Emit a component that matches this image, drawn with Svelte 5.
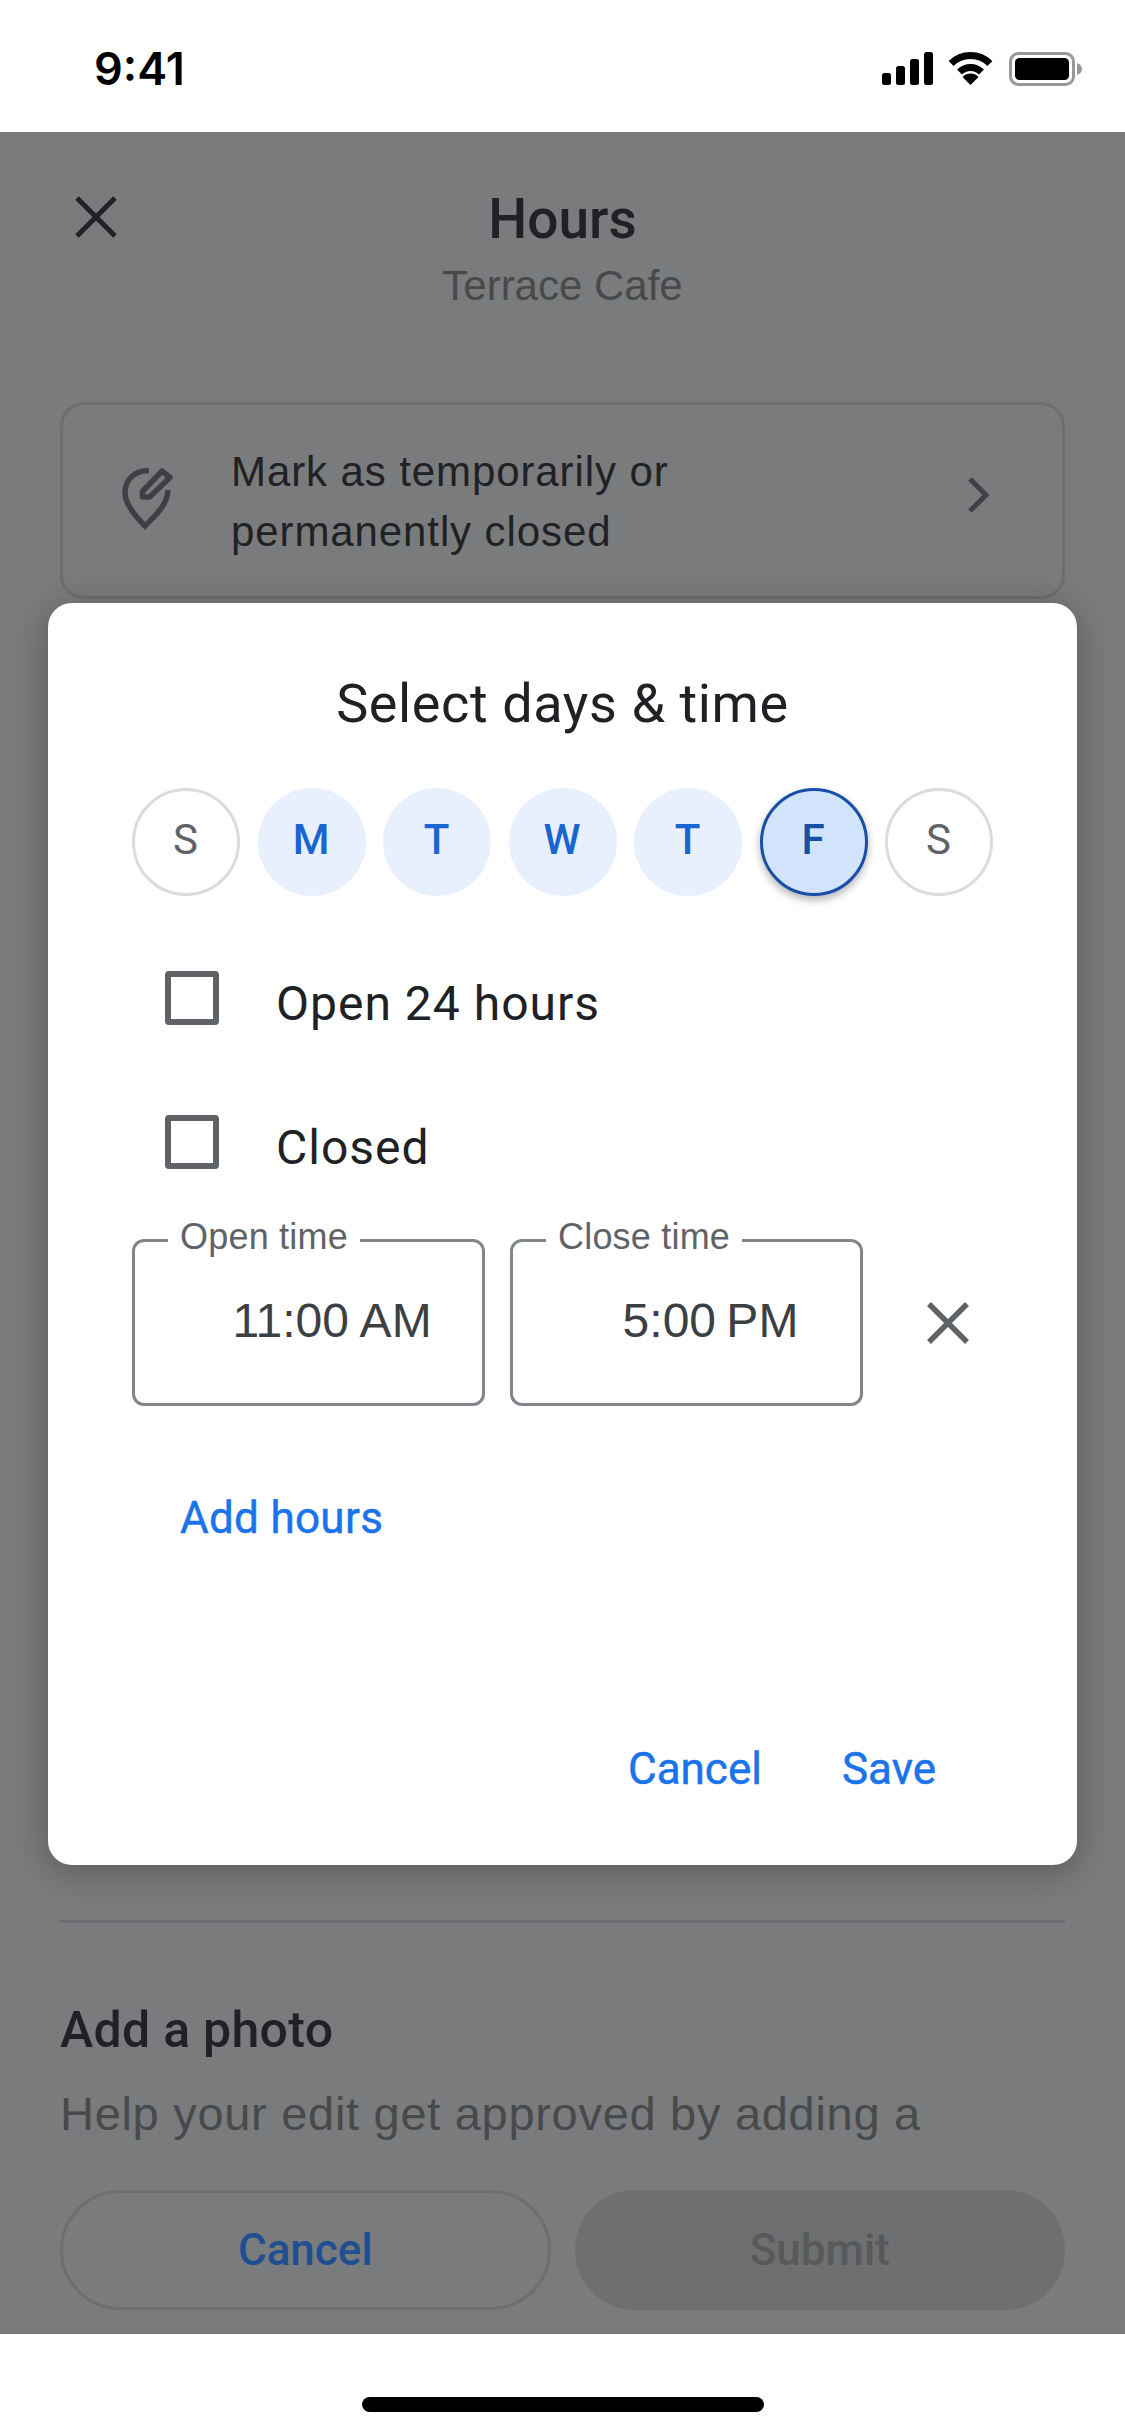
<script>
  const days = [
    { l: 'S', s: 'off' }, { l: 'M', s: 'on' }, { l: 'T', s: 'on' }, { l: 'W', s: 'on' },
    { l: 'T', s: 'on' }, { l: 'F', s: 'cur' }, { l: 'S', s: 'off' }
  ];
  const fields = [
    { label: 'Open time', value: '11:00 AM', tight: false },
    { label: 'Close time', value: '5:00 PM', tight: true }
  ];
</script>

<div class="phone">
  <header class="status">
    <span class="clock">9:41</span>
    <div class="sicons">
      <svg width="51" height="33" viewBox="0 0 51 33"><rect x="0" y="21" width="9" height="12" rx="2.5"/><rect x="14" y="14" width="9" height="19" rx="2.5"/><rect x="28" y="7" width="9" height="26" rx="2.5"/><rect x="42" y="0" width="9" height="33" rx="2.5"/></svg>
      <svg width="45" height="33" viewBox="0 0 45 33"><g fill="none" stroke="#000" stroke-width="7"><path d="M3.1 11.6A27.5 27.5 0 0 1 41.9 11.6"/><path d="M11.5 20A15.5 15.5 0 0 1 33.5 20"/></g><path d="M22.5 33L14.5 25A11 11 0 0 1 30.5 25Z"/></svg>
      <svg class="batt" width="73" height="34" viewBox="0 0 73 34"><rect x="1.5" y="1.5" width="63" height="31" rx="8" fill="none" stroke="#999" stroke-width="3"/><rect x="6" y="6" width="54" height="22" rx="4.5"/><path d="M68 11C71 12 73 14 73 17C73 20 71 22 68 23Z" fill="#999"/></svg>
    </div>
  </header>

  <main class="main">
    <div class="head">
      <svg class="close" width="42" height="42" viewBox="0 0 42 42"><path d="M2 2L40 40M40 2L2 40" stroke="#202124" stroke-width="5" fill="none"/></svg>
      <h1>Hours</h1>
      <p class="sub">Terrace Cafe</p>
    </div>

    <div class="card">
      <svg class="pin" width="51" height="63" viewBox="0 0 51 63" fill="none" stroke="#3f4043" stroke-width="5.5"><path d="M27 3.5C12 3.5 3 13 3 26C3 37 13 49 23 59C33 49 46 37 46 23"/><path d="M20.5 24.5L40 4L48 10.5L27.5 30H20.5Z" stroke-linejoin="round"/></svg>
      <p>Mark as temporarily or<br />permanently closed</p>
      <svg class="chev" width="22" height="36" viewBox="0 0 22 36"><path d="M3 2L19 18L3 34" fill="none" stroke="#3f4043" stroke-width="5"/></svg>
    </div>

    <div class="bottom">
      <hr />
      <h2>Add a photo</h2>
      <p class="help">Help your edit get approved by adding a</p>
      <div class="btns">
        <div class="btn ghost">Cancel</div>
        <div class="btn solid">Submit</div>
      </div>
    </div>

    <section class="dialog">
      <h3>Select days &amp; time</h3>
      <div class="days">
        {#each days as d}
          <div class="day {d.s}">{d.l}</div>
        {/each}
      </div>
      <div class="check first"><span class="box"></span><span class="clabel">Open 24 hours</span></div>
      <div class="check"><span class="box"></span><span class="clabel">Closed</span></div>
      <div class="times">
        {#each fields as f}
          <div class="field">
            <span class="flabel">{f.label}</span>
            <span class="fval" class:tight={f.tight}>{f.value}</span>
          </div>
        {/each}
        <svg class="rm" width="42" height="42" viewBox="0 0 42 42"><path d="M2 2L40 40M40 2L2 40" stroke="#5f6368" stroke-width="5.5" fill="none"/></svg>
      </div>
      <div class="add">Add hours</div>
      <div class="actions"><span>Cancel</span><span>Save</span></div>
    </section>
  </main>

  <footer class="home"><span></span></footer>
</div>

<style>
  :global(body) { margin: 0; background: #fff; }
  .phone { width: 1125px; height: 2436px; display: flex; flex-direction: column; font-family: "Liberation Sans", Arial, sans-serif; overflow: hidden; }
  .status { height: 132px; background: #fff; display: flex; justify-content: space-between; padding: 0 43px 0 94px; box-sizing: border-box; }
  .clock { font-family: Inter, sans-serif; font-weight: 600; font-size: 45px; line-height: 44px; margin-top: 47px; color: #000; }
  .sicons { display: flex; gap: 15px; margin-top: 52px; align-items: flex-start; }
  .batt { margin-left: 1px; }
  .main { flex: 1; position: relative; background: #7a7b7d; display: flex; flex-direction: column; }
  .head { position: relative; text-align: center; padding-top: 57px; height: 270px; box-sizing: border-box; }
  .close { position: absolute; left: 75px; top: 64px; }
  h1 { margin: 0; font-size: 55px; line-height: 60px; font-weight: 500; color: #202124; font-family: Roboto, sans-serif; }
  .sub { margin: 12px 0 0; font-size: 42px; line-height: 50px; color: #48494b; }
  .card { margin: 0 60px; height: 197px; box-sizing: border-box; border: 3px solid #6d6e70; border-radius: 24px; display: flex; align-items: center; padding: 0 73px 0 59px; }
  .card p { flex: 1; margin: 0 0 0 58px; padding-top: 3px; font-size: 42px; line-height: 60px; letter-spacing: 0.9px; color: #202124; }
  .pin { margin-top: -4px; }
  .chev { margin-top: -12px; }
  .bottom { margin-top: auto; padding: 0 60px 24px; }
  hr { border: 0; height: 3px; background: #6c6d70; margin: 0 0 80px; }
  h2 { margin: 0; font-family: Roboto, sans-serif; font-weight: 500; font-size: 50px; line-height: 54px; letter-spacing: 0.3px; color: #202124; }
  .help { margin: 29px 0 0; font-size: 47px; line-height: 56px; letter-spacing: 0.7px; color: #48494b; white-space: nowrap; }
  .btns { display: grid; grid-template-columns: 1fr 1fr; gap: 24px; margin-top: 48px; }
  .btn { height: 120px; box-sizing: border-box; border-radius: 60px; display: flex; align-items: center; justify-content: center; font-size: 44px; font-weight: 500; font-family: Roboto, sans-serif; }
  .ghost { border: 3px solid #6d6e70; color: #1f4f90; }
  .solid { background: #6e6f71; color: #58595b; }
  .dialog { position: absolute; left: 48px; top: 471px; width: 1029px; height: 1262px; box-sizing: border-box; background: #fff; border-radius: 24px; box-shadow: 0 6px 36px rgba(0, 0, 0, 0.28); padding: 71px 0 0 84px; font-family: Roboto, sans-serif; }
  h3 { margin: 0 84px 0 0; text-align: center; font-weight: 400; font-size: 54px; line-height: 60px; letter-spacing: 0.6px; color: #202124; }
  .days { display: flex; gap: 17.5px; margin-top: 54px; }
  .day { width: 108px; height: 108px; box-sizing: border-box; border-radius: 50%; display: flex; align-items: center; justify-content: center; font-size: 42px; font-weight: 500; padding: 0 1px 5px 0; }
  .off { border: 3px solid #dadce0; color: #5f6368; font-weight: 400; }
  .on { background: #e8f0fe; color: #1a66d0; }
  .cur { background: #d2e3fc; border: 3px solid #174ea6; color: #174ea6; box-shadow: 0 4px 8px rgba(0, 0, 0, 0.3); }
  .check { display: flex; align-items: flex-start; height: 124px; margin-left: 33px; gap: 57px; font-size: 48px; line-height: 60px; letter-spacing: 1px; color: #202124; }
  .clabel { margin-top: 3px; }
  .first { margin-top: 75px; height: 144px; }
  .box { width: 54px; height: 54px; box-sizing: border-box; border: 6px solid #5f6368; border-radius: 4px; }
  .times { display: flex; gap: 25px; align-items: flex-start; }
  .field { position: relative; width: 353px; height: 167px; box-sizing: border-box; border: 3px solid #80868b; border-radius: 12px; display: flex; justify-content: center; padding: 49px 0 0 47px; font-family: "Liberation Sans", Arial, sans-serif; }
  .flabel { position: absolute; left: 33px; top: -26px; padding: 0 12px; background: #fff; font-size: 36px; line-height: 42px; letter-spacing: 0.2px; color: #5f6368; white-space: nowrap; }
  .fval { font-size: 48px; line-height: 60px; color: #3c4043; white-space: nowrap; }
  .tight { word-spacing: -3px; margin-left: 1px; }
  .rm { margin: 63px 0 0 39px; }
  .add { margin: 87px 0 0 48px; font-size: 44px; line-height: 50px; letter-spacing: 0.3px; -webkit-text-stroke: 0.5px #1a73e8; color: #1a73e8; }
  .actions { display: flex; gap: 80px; margin: 201px 0 0 496px; font-size: 44px; line-height: 50px; -webkit-text-stroke: 0.5px #1a73e8; color: #1a73e8; }
  .home { height: 102px; background: #fff; display: flex; justify-content: center; padding-top: 63px; box-sizing: border-box; }
  .home span { width: 402px; height: 15px; border-radius: 8px; background: #000; }
</style>
